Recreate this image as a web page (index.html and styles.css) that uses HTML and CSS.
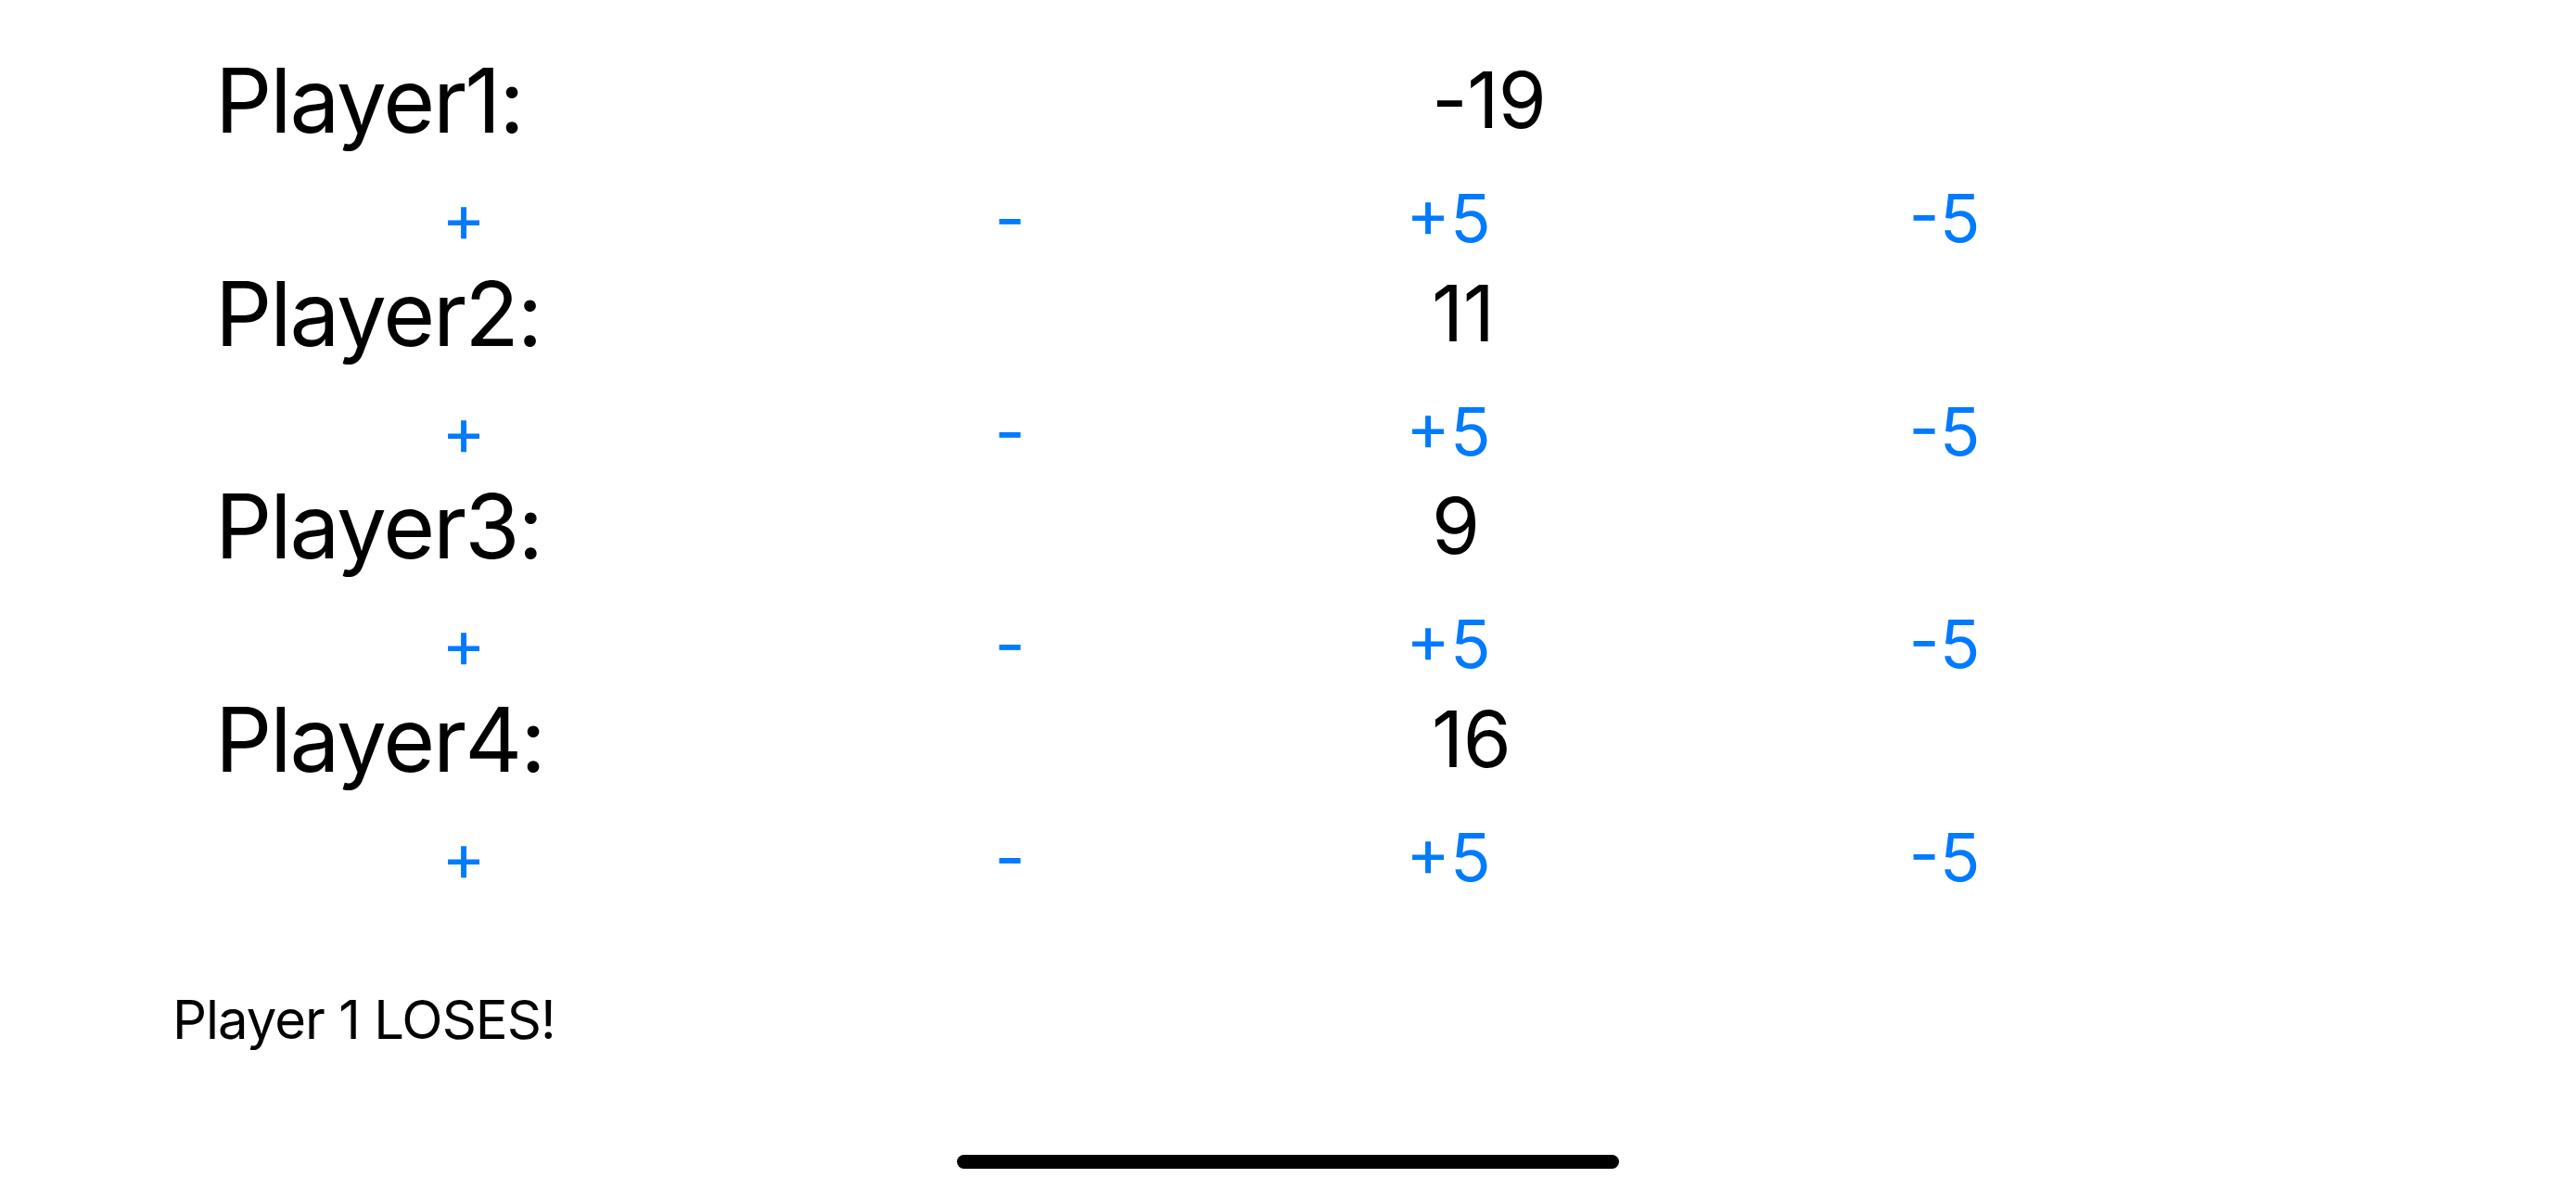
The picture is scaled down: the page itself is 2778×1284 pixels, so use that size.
FILE: index.html
```html
<!DOCTYPE html>
<html lang="en">
<head>
<meta charset="utf-8">
<title>Score Keeper</title>
<link rel="stylesheet" href="styles.css">
</head>
<body>
<main class="board">
  <section class="player">
    <div class="player-row"><span class="name">Player1:</span><span class="score">-19</span></div>
    <div class="buttons"><span class="btn">+</span><span class="btn">-</span><span class="btn">+5</span><span class="btn">-5</span></div>
  </section>
  <section class="player">
    <div class="player-row"><span class="name">Player2:</span><span class="score">11</span></div>
    <div class="buttons"><span class="btn">+</span><span class="btn">-</span><span class="btn">+5</span><span class="btn">-5</span></div>
  </section>
  <section class="player">
    <div class="player-row"><span class="name">Player3:</span><span class="score">9</span></div>
    <div class="buttons"><span class="btn">+</span><span class="btn">-</span><span class="btn">+5</span><span class="btn">-5</span></div>
  </section>
  <section class="player">
    <div class="player-row"><span class="name">Player4:</span><span class="score">16</span></div>
    <div class="buttons"><span class="btn">+</span><span class="btn">-</span><span class="btn">+5</span><span class="btn">-5</span></div>
  </section>
  <p class="result">Player 1 LOSES!</p>
</main>
<div class="home-indicator"></div>
</body>
</html>
```
FILE: styles.css
```css
html, body {
  margin: 0;
  padding: 0;
  background: #ffffff;
  width: 2778px;
  height: 1284px;
  overflow: hidden;
}
body {
  font-family: "Inter", "Roboto", "Liberation Sans", sans-serif;
  color: #000000;
  position: relative;
}
.board {
  padding-top: 58px;
}
.player {
  display: flex;
  flex-direction: column;
  height: 229.5px;
}
.player-row {
  display: flex;
  align-items: center;
  height: 100px;
  padding-left: 232px;
}
.name {
  width: 1312px;
  font-size: 96px;
  line-height: 100px;
  letter-spacing: -2px;
}
.score {
  font-size: 84px;
  line-height: 100px;
  letter-spacing: -0.5px;
}
.buttons {
  display: grid;
  grid-template-columns: 400px 778px 168px 902px;
  padding-left: 300px;
  padding-top: 25px;
  height: 104.5px;
  align-items: center;
}
.btn {
  text-align: center;
  color: #007aff;
  font-size: 72px;
  line-height: 104px;
}
.result {
  margin: 88px 0 0 0;
  padding-left: 186px;
  font-size: 58px;
  line-height: 70px;
  letter-spacing: -1px;
}
.home-indicator {
  position: absolute;
  left: 1032px;
  bottom: 24px;
  width: 714px;
  height: 15px;
  border-radius: 8px;
  background: #000000;
}
```
